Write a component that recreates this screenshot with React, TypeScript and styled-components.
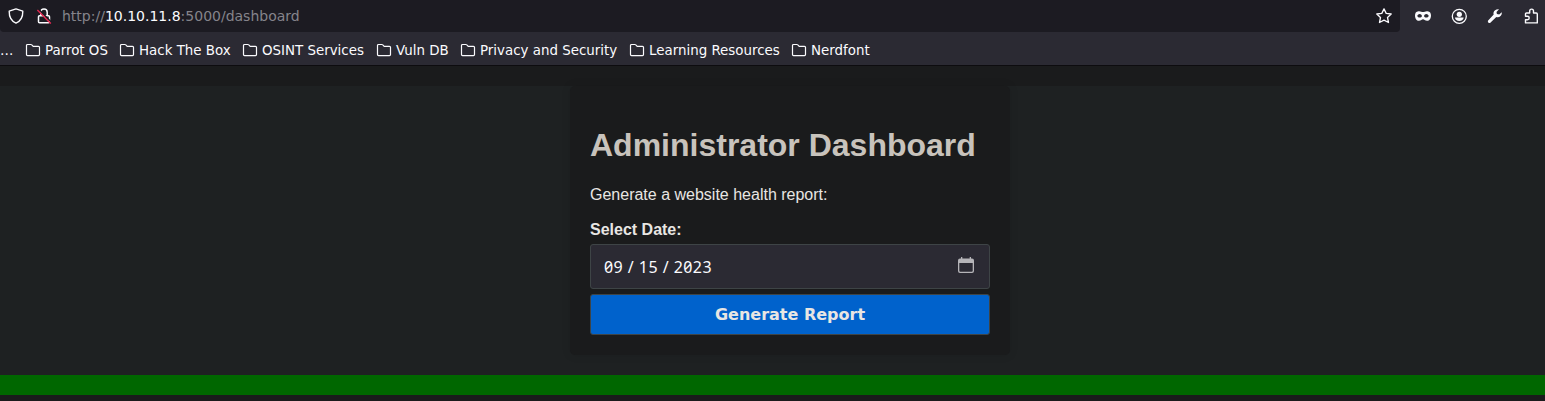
import React from "react";
import styled, { createGlobalStyle } from "styled-components";

const Global = createGlobalStyle`
  * { box-sizing: border-box; }
  body { margin: 0; background: #1a1b1c; overflow: hidden; }
`;

const Window = styled.div`
  height: 401px;
  display: flex;
  flex-direction: column;
  overflow: hidden;
  color: #fbfbfe;
  font-family: "DejaVu Sans", sans-serif;
`;

const Toolbar = styled.div`
  height: 32px;
  flex: none;
  display: flex;
  background: #2b2a33;
`;

const AddressBar = styled.div`
  width: 1400px;
  height: 32px;
  padding: 0 8px;
  display: flex;
  align-items: center;
  background: #1c1b22;
  border-radius: 0 0 4px 4px;
`;

const Address = styled.div`
  margin-left: 10px;
  flex: 1;
  font-size: 14px;
  line-height: 32px;
  color: #85848b;
  white-space: nowrap;
`;

const Host = styled.span`
  color: #fbfbfe;
`;

const Actions = styled.div`
  display: flex;
  align-items: center;
  gap: 20px;
  margin-left: 15px;
`;

const Icon = styled.svg<{ $gap?: number }>`
  width: 16px;
  height: 16px;
  flex: none;
  display: block;
  margin-left: ${(p) => p.$gap ?? 0}px;
`;

const Bookmarks = styled.div`
  height: 34px;
  flex: none;
  display: flex;
  align-items: center;
  padding-top: 3px;
  background: #2b2a33;
  border-bottom: 1px solid #0d0c0f;
  font-size: 13.4px;
  white-space: nowrap;
`;

const Overflow = styled.span`
  width: 25px;
`;

const Bookmark = styled.div<{ $width: number }>`
  width: ${(p) => p.$width}px;
  flex: none;
  display: flex;
  align-items: center;
  gap: 4px;
`;

const Page = styled.main`
  flex: 1;
  padding-top: 20px;
  background: #1a1b1c;
  font-family: "Liberation Sans", Arial, sans-serif;
`;

const Section = styled.section`
  height: 289px;
  display: flex;
  justify-content: center;
  align-items: flex-start;
  background: #1e2122;
`;

const Card = styled.div`
  width: 440px;
  height: 269px;
  margin-left: 35px;
  padding: 20px;
  border-radius: 5px;
  background: #1a1b1c;
  box-shadow: 0 0 10px rgba(0, 0, 0, 0.1);
`;

const Title = styled.h1`
  margin: 21px 0 22px;
  font-size: 32px;
  line-height: 37px;
  color: #c8c3bc;
`;

const Text = styled.p`
  margin: 0 0 17px;
  font-size: 16px;
  line-height: 18px;
  color: #e8e6e3;
`;

const Label = styled.label`
  display: block;
  margin-bottom: 5px;
  font-size: 16px;
  line-height: 18px;
  font-weight: bold;
  color: #e8e6e3;
`;

const DateField = styled.div`
  height: 45px;
  padding: 0 15px 0 13px;
  display: flex;
  align-items: center;
  justify-content: space-between;
  background: #2b2a33;
  border: 1px solid #3e4446;
  border-radius: 3px;
  color: #fbfbfe;
  font: 16px/22px "Noto Sans", sans-serif;
`;

const CalendarIcon = styled(Icon)`
  margin-bottom: 4px;
`;

const Segments = styled.div`
  display: flex;
  letter-spacing: 0.45px;
  font-feature-settings: "zero" 1;
`;

const Slash = styled.span`
  width: 15.6px;
  text-align: center;
`;

const Submit = styled.button`
  display: block;
  width: 100%;
  height: 41px;
  margin-top: 5px;
  padding: 0;
  background: #0062cc;
  border: 1px solid #3e4446;
  border-radius: 3px;
  color: #e8e6e3;
  font: bold 16px/19px "DejaVu Sans", sans-serif;
`;

const Footer = styled.footer`
  height: 20px;
  background: #006700;
`;

const folders: [string, number][] = [
  ["Parrot OS", 94],
  ["Hack The Box", 123],
  ["OSINT Services", 134],
  ["Vuln DB", 84],
  ["Privacy and Security", 169],
  ["Learning Resources", 162],
  ["Nerdfont", 90],
];

const FolderIcon = () => (
  <Icon viewBox="0 0 16 16" fill="none" stroke="#fbfbfe" strokeWidth="1.2">
    <path d="M1.500 4.200V12.600a1 1 0 0 0 1 1h11a1 1 0 0 0 1-1V5.300a1 1 0 0 0-1-1H8.200L6.800 2.900a1.500 1.500 0 0 0-1-.4H2.600a1 1 0 0 0-1.100 1z" />
  </Icon>
);

export default function App() {
  return (
    <Window>
      <Global />
      <Toolbar>
        <AddressBar>
          <Icon viewBox="0 0 16 16" fill="none" stroke="#fbfbfe" strokeWidth="1.4" strokeLinejoin="round">
            <path d="M8 .9 14.8 3.2C14.9 8.4 12.800 13 8 15.100 3.200 13 1.100 8.400 1.200 3.200z" />
          </Icon>
          <Icon $gap={12} viewBox="0 0 16 16" fill="none" stroke="#fbfbfe" strokeWidth="1.5">
            <path d="M4.800 7V4.200a3.200 3.200 0 0 1 6.400 0V7M3.500 7.700h9a1 1 0 0 1 1 1v5a1 1 0 0 1-1 1h-9a1 1 0 0 1-1-1v-5a1 1 0 0 1 1-1z" />
            <path d="M3 1.600 15 13.800" stroke="#1c1b22" strokeWidth="1.500" />
            <path d="M1.400 2 14.800 15.600" stroke="#e22850" strokeWidth="1.400" />
          </Icon>
          <Address>http://<Host>10.10.11.8</Host>:5000/dashboard</Address>
          <Icon viewBox="0 0 16 16" fill="none" stroke="#fbfbfe" strokeWidth="1.3" strokeLinejoin="round">
            <path d="m8 .9 2.200 4.500 5 .6-3.700 3.500 1 5L8 12.200l-4.500 2.300 1-5L.8 6l5-.6z" />
          </Icon>
        </AddressBar>
        <Actions>
          <Icon viewBox="0 0 16 16">
            <path fill="#fbfbfe" fillRule="evenodd" d="M3.500 3.200C5.500 2.900 6.600 4 8 4s2.500-1.100 4.500-.8c2.500.3 3.500 1.900 3.500 4.300 0 3-1.500 5.300-4 5.300-2 0-2.800-1.600-4-1.600s-2 1.600-4 1.600c-2.500 0-4-2.300-4-5.300 0-2.400 1-4 3.500-4.300zM4.700 5.900C3.300 5.900 2.500 6.900 2.300 7.900c.5 1 1.300 1.500 2.400 1.500S6.600 8.900 7 7.900c-.4-1.100-1.200-2-2.300-2zm6.600 0c-1.100 0-1.900.9-2.300 2 .4 1 1.200 1.500 2.300 1.500s1.900-.5 2.400-1.500c-.2-1-1-2-2.400-2z" />
          </Icon>
          <Icon viewBox="0 0 16 16" fill="#fbfbfe">
            <circle cx="8.3" cy="8.3" r="7" fill="none" stroke="#fbfbfe" strokeWidth="1.3" />
            <circle cx="8.300" cy="6.300" r="2.600" />
            <path d="M4 9.500h8.600c0 2-1.900 3.500-4.300 3.500S4 11.500 4 9.500z" />
          </Icon>
          <Icon viewBox="0 0 16 16" fill="#fbfbfe">
            <path d="M14.700 4.300 12.200 6.600 9.900 6.100 9.500 4 12 1.200C9.400.8 6.900 2.300 6.500 4.700c-.1.700 0 1.300.2 1.900L1.400 12.300c-1.600 1.600.7 3.700 2.200 2.200l5.700-5.400c3.200.9 6.100-1.700 5.400-4.800z" />
          </Icon>
          <Icon $gap={1} viewBox="0 0 16 16" fill="none" stroke="#fbfbfe" strokeWidth="1.4" strokeLinejoin="round">
            <path d="M1.500 14.900V11.700h2a1.700 1.700 0 0 0 0-3.400h-2V6a1 1 0 0 1 1-1H5.700V3a1.900 1.900 0 0 1 3.800 0v2h2.800a1 1 0 0 1 1 1v8.900z" />
          </Icon>
        </Actions>
      </Toolbar>
      <Bookmarks>
        <Overflow>…</Overflow>
        {folders.map(([name, width]) => (
          <Bookmark key={name} $width={width}>
            <FolderIcon />
            {name}
          </Bookmark>
        ))}
      </Bookmarks>
      <Page>
        <Section>
          <Card>
            <Title>Administrator Dashboard</Title>
            <Text>Generate a website health report:</Text>
            <Label>Select Date:</Label>
            <DateField>
              <Segments>
                <span>09</span><Slash>/</Slash><span>15</span><Slash>/</Slash><span>2023</span>
              </Segments>
              <CalendarIcon viewBox="0 0 16 16" fill="#b5b4b8">
                <path fillRule="evenodd" d="M3 0h1.300v1.500h7.400V0H13v1.500h1a2 2 0 0 1 2 2V14a2 2 0 0 1-2 2H2a2 2 0 0 1-2-2V3.500a2 2 0 0 1 2-2h1zM1.300 6v7.700a1 1 0 0 0 1 1h11.400a1 1 0 0 0 1-1V6z" />
              </CalendarIcon>
            </DateField>
            <Submit>Generate Report</Submit>
          </Card>
        </Section>
        <Footer />
      </Page>
    </Window>
  );
}
